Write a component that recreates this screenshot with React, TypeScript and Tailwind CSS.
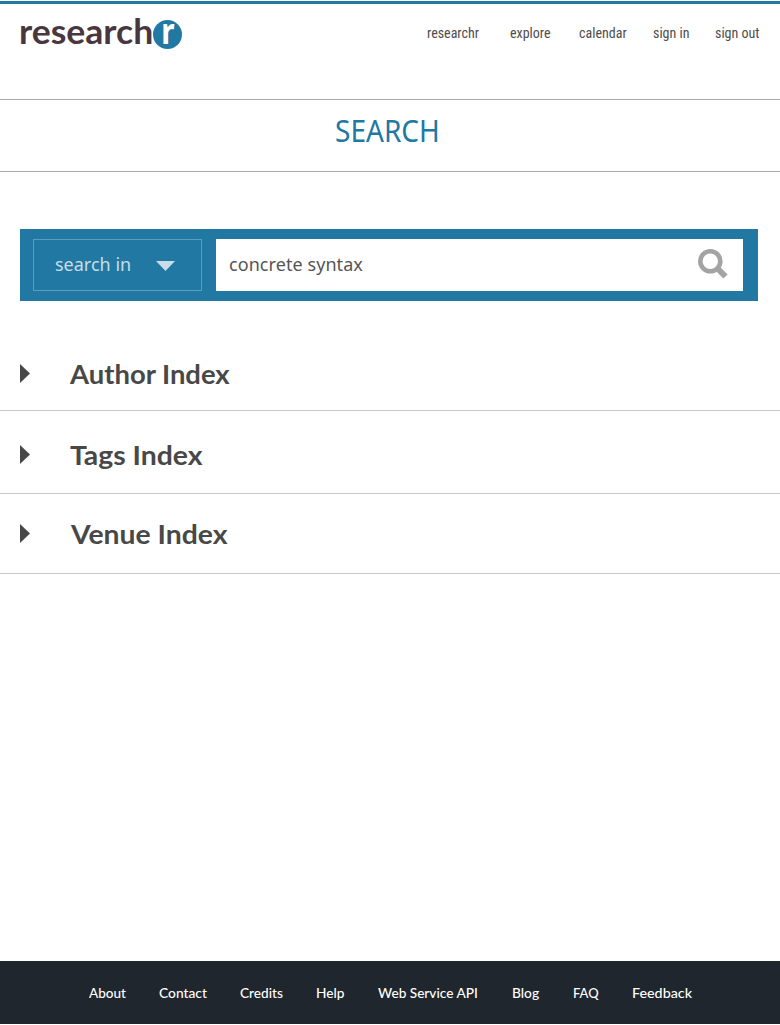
import React from "react";

const links = [
  { label: "researchr", box: "w-[83px]" },
  { label: "explore", box: "w-[69px]" },
  { label: "calendar", box: "w-[74px]" },
  { label: "sign in", box: "w-[62px]" },
  { label: "sign out", box: "w-[65px]" },
];

const indexes = [
  { label: "Author Index", row: "h-[81px] pt-[34px]", text: "ml-[40px] scale-x-[1.055]" },
  { label: "Tags Index", row: "h-[83px] pt-[34px]", text: "ml-[40px] scale-x-[1.09]" },
  { label: "Venue Index", row: "h-[80px] pt-[30px]", text: "ml-[41px] scale-x-[1.09]" },
];

const footer = [
  { label: "About", box: "w-[70px]", text: "scale-x-[1.04]" },
  { label: "Contact", box: "w-[81px]", text: "scale-x-[1.06]" },
  { label: "Credits", box: "w-[76px]", text: "scale-x-[1.05]" },
  { label: "Help", box: "w-[62px]", text: "scale-x-[1.05]" },
  { label: "Web Service API", box: "w-[134px]", text: "scale-x-[1.05]" },
  { label: "Blog", box: "w-[61px]", text: "scale-x-[1.06]" },
  { label: "FAQ", box: "w-[59px]", text: "scale-x-100" },
  { label: "Feedback", box: "w-[70px]", text: "scale-x-[1.1]" },
];

export default function App() {
  return (
    <div className="flex h-[1024px] w-[780px] flex-col overflow-hidden bg-white">
      <header className="mt-px h-[99px] shrink-0 border-t-[3px] border-b border-t-[#2178a3] border-b-[#a9a9a9]">
        <div className="flex">
          <a className="ml-[19px] mt-[10px] flex h-[36px] w-[408px] items-start">
            <span className="w-[134px] origin-left scale-x-[1.045] font-['Lato',sans-serif] text-[34px] leading-[34px] font-bold whitespace-nowrap text-[#4a363e]">
              research
            </span>
            <span className="mt-[6px] flex h-[29px] w-[29px] justify-center rounded-full bg-[#2178a3] font-['Noto_Sans',sans-serif] text-[35px] leading-[21px] font-bold text-white">
              <span className="scale-x-[0.85]">r</span>
            </span>
          </a>
          <nav className="mt-[21px] flex font-['Roboto_Condensed','Roboto',sans-serif] text-[14px] leading-4 text-[#4d4d4d]">
            {links.map((l) => (
              <a key={l.label} className={`whitespace-nowrap ${l.box}`}>{l.label}</a>
            ))}
          </nav>
        </div>
      </header>

      <section className="flex h-[72px] shrink-0 border-b border-[#a9a9a9] pl-[335px] pt-[12px]">
        <h1 className="origin-left scale-x-[0.935] font-['Noto_Sans',sans-serif] text-[30px] leading-[38px] text-[#2178a3]">SEARCH</h1>
      </section>

      <form className="mt-[57px] ml-5 flex h-[72px] w-[738px] shrink-0 bg-[#2178a3] py-[10px] pl-[13px] font-['Noto_Sans',sans-serif]">
        <div className="flex h-[52px] w-[169px] border border-[#5b9dbf] pl-[21px] text-[#c8dde8]">
          <span className="w-[101px] text-[18px] leading-[49px] whitespace-nowrap">search in</span>
          <svg className="mt-[21px] h-[10px] w-[20px]" viewBox="0 0 20 10"><path d="M0 0H19L9.5 10Z" fill="currentColor" /></svg>
        </div>
        <div className="ml-[14px] flex h-[52px] w-[527px] bg-white pl-[13px] text-[#555]">
          <span className="w-[468px] text-[18px] leading-[50px] tracking-[0.07px] whitespace-nowrap">concrete syntax</span>
          <svg className="mt-[9px] h-[32px] w-[32px]" viewBox="0 0 32 32" fill="none" stroke="#a3a3a3">
            <circle cx="13.3" cy="13.2" r="10" strokeWidth="4.6" />
            <path d="M20 20L28.5 28.5" strokeWidth="6" />
          </svg>
        </div>
      </form>

      <main className="mt-[29px] flex-1">
        {indexes.map((i) => (
          <div key={i.label} className={`flex border-b border-[#c6c6c6] pl-5 ${i.row}`}>
            <svg className="h-[19px] w-[10px]" viewBox="0 0 10 19"><path d="M0 0L10 9.5L0 19Z" fill="#484848" /></svg>
            <h2 className={`-mt-px h-6 origin-left font-['Lato',sans-serif] text-[26px] leading-[23px] font-bold whitespace-nowrap text-[#484848] ${i.text}`}>{i.label}</h2>
          </div>
        ))}
      </main>

      <footer className="flex h-[63px] shrink-0 bg-[#20262d] pt-[24px] pl-[89px] font-['Lato',sans-serif] text-[13px] leading-4 font-medium text-white">
        {footer.map((f) => (
          <a key={f.label} className={f.box}>
            <span className={`block w-max origin-left whitespace-nowrap ${f.text}`}>{f.label}</span>
          </a>
        ))}
      </footer>
    </div>
  );
}
